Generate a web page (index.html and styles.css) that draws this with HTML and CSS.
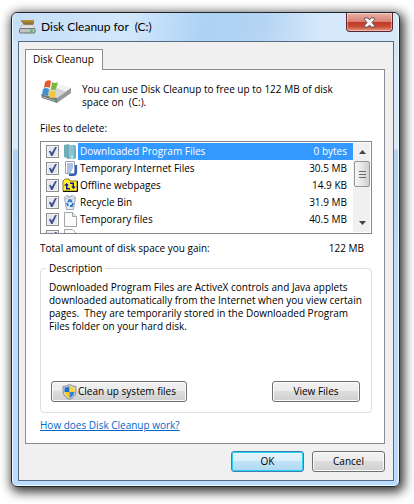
FILE: index.html
```html
<!DOCTYPE html>
<html lang="en">
<head>
    <meta charset="UTF-8">
    <meta name="viewport" content="width=device-width, initial-scale=1.0">
    <title>Disk Cleanup</title>
    <link rel="stylesheet" href="styles.css">
</head>
<body>

<div class="window">
    <div class="titlebar">
        <svg class="title-icon" width="17" height="16" viewBox="0 0 17 16">
            <path d="M2 1h13v2H2z" fill="#b58b32"/>
            <path d="M3 3h12l-1 3H5z" fill="#6f5523"/>
            <path d="M5 3v3M7 3v3M9 3v3M11 3v3M13 3v3" stroke="#d9b45c" stroke-width=".7"/>
            <path d="M3 6h11l2 4H1z" fill="#e4e5e8" stroke="#a5a7ac" stroke-width=".6"/>
            <rect x=".5" y="9.500" width="15.500" height="4.500" rx="1" fill="#bfc1c6" stroke="#707277"/>
            <rect x="11.500" y="10.500" width="2" height="3" fill="#35c43c"/>
        </svg>
        <h1>Disk Cleanup for &nbsp;(C:)</h1>
        <button class="close" aria-label="Close">
            <svg width="13" height="11" viewBox="0 0 13 11">
                <path d="M1.500 1h3.500l1.500 2L8 1h3.500v1.500L9 5.500l2.500 3V10H8L6.500 8 5 10H1.500V8.500l2.500-3-2.500-3z" fill="#f8f8fa" stroke="#5a4c58" stroke-width=".9"/>
            </svg>
        </button>
    </div>

    <div class="client">
        <div class="tabs"><button class="tab">Disk Cleanup</button></div>

        <div class="page">
            <div class="intro">
                <svg width="32" height="24" viewBox="0 0 32 24">
                    <path d="M2 14L17 4l14 4-14 10z" fill="#d3d5d6"/>
                    <path d="M17 4l14 4-5 3.500L13 7z" fill="#f0f1f1"/>
                    <path d="M1 14l16 4v5L2 18z" fill="#77797c"/>
                    <path d="M17 18L31 8v5l-14 10z" fill="#96999b"/>
                    <path d="M3 17l12 4" stroke="#aeb1b3"/>
                    <path d="M13 19.500l2 .5v1.500l-2-.5z" fill="#55dc54"/>
                    <path d="M5 2q3-3 6-1l-1 7q-3-2-6 0z" fill="#e5582e"/>
                    <path d="M12 2q3 2 6 0l-2 7q-2 2-5 0z" fill="#79b93a"/>
                    <path d="M3 9q3-2 6 0l-1 7q-3-2-6-1z" fill="#3d91d0"/>
                    <path d="M10 10q2 2 6 1l-1 6q-3 2-6 0z" fill="#f6c63a"/>
                </svg>
                <p>You can use Disk Cleanup to free up to 122 MB of disk space on &nbsp;(C:).</p>
            </div>

            <p class="list-title">Files to delete:</p>
            <div class="list">
                <ul>
                    <li>
                        <input type="checkbox" id="f1" checked>
                        <svg width="16" height="17" viewBox="0 0 16 17">
                            <path d="M2 2l5-1v15l-5-2z" fill="#6faeb9"/>
                            <path d="M5 2h8l1 1v12l-1 1H6z" fill="#8cc3cb"/>
                            <path d="M6 2v14M11 2l2 2v11" stroke="#5b9bab" fill="none"/>
                            <path d="M9 12h2v4H9z" fill="#b3dce1"/>
                        </svg>
                        <label class="selected" for="f1"><span>Downloaded Program Files</span><span>0 bytes</span></label>
                    </li>
                    <li>
                        <input type="checkbox" id="f2" checked>
                        <svg width="16" height="17" viewBox="0 0 16 17">
                            <path d="M3.500 1.500h9v12h-9z" fill="#fff" stroke="#98a1ac"/>
                            <path d="M5 4h6M5 6h6M5 8h6M5 10h5M5 12h4" stroke="#5b86c6"/>
                            <path d="M14 5v7q0 3-3 3H7" fill="none" stroke="#2d5fc5" stroke-width="2.200"/>
                        </svg>
                        <label for="f2"><span>Temporary Internet Files</span><span>30.5 MB</span></label>
                    </li>
                    <li>
                        <input type="checkbox" id="f3" checked>
                        <svg width="16" height="17" viewBox="0 0 16 17">
                            <path d="M1 4l2-2h4l1 2h7v10H1z" fill="#fff22d" stroke="#8b7c16"/>
                            <path d="M15.500 4v10.500H1" fill="none" stroke="#111"/>
                            <path d="M2 8.500L4.500 6 7 8.500H5.500V11H8v1.500H4v-4zM14 9.500L11.500 12 9 9.500h1.500V7H8V5.500h4v4z" fill="#13138c"/>
                        </svg>
                        <label for="f3"><span>Offline webpages</span><span>14.9 KB</span></label>
                    </li>
                    <li>
                        <input type="checkbox" id="f4" checked>
                        <svg width="16" height="17" viewBox="0 0 16 17">
                            <path d="M2.500 3.500l2-2 3 1 3-1 3 2-2 12h-7z" fill="#e5eaf0" stroke="#9ba8b6"/>
                            <path d="M3 4l5 2 5-2M5 2l2 2 3-2" fill="none" stroke="#b4bec9"/>
                            <path d="M6 8l2-2 2 2M11 9l-1 3H8M6 12L5 9" fill="none" stroke="#2a74cb" stroke-width="1.800"/>
                        </svg>
                        <label for="f4"><span>Recycle Bin</span><span>31.9 MB</span></label>
                    </li>
                    <li>
                        <input type="checkbox" id="f5" checked>
                        <svg width="16" height="17" viewBox="0 0 16 17">
                            <path d="M2.500 1.500h8l4 4v10h-12z" fill="#fbfbfb" stroke="#a2a4a6"/>
                            <path d="M10.500 1.500v4h4" fill="#e7e8e9" stroke="#a2a4a6"/>
                        </svg>
                        <label for="f5"><span>Temporary files</span><span>40.5 MB</span></label>
                    </li>
                    <li>
                        <input type="checkbox" id="f6" aria-label="More files" checked>
                        <svg width="16" height="17" viewBox="0 0 16 17">
                            <path d="M2.500 1.500h8l4 4v10h-12z" fill="#fbfbfb" stroke="#a2a4a6"/>
                        </svg>
                    </li>
                </ul>
                <div class="scrollbar">
                    <button aria-label="Scroll up"><svg width="7" height="4" viewBox="0 0 7 4"><path d="M0 4l3.500-4L7 4z" fill="#404347"/></svg></button>
                    <div class="thumb"><i></i><i></i><i></i></div>
                    <button class="down" aria-label="Scroll down"><svg width="7" height="4" viewBox="0 0 7 4"><path d="M0 0l3.500 4L7 0z" fill="#404347"/></svg></button>
                </div>
            </div>

            <div class="total"><span>Total amount of disk space you gain:</span><span>122 MB</span></div>

            <fieldset>
                <legend>Description</legend>
                <p>Downloaded Program Files are ActiveX controls and Java applets downloaded automatically from the Internet when you view certain pages. &nbsp;They are temporarily stored in the Downloaded Program Files folder on your hard disk.</p>
                <div class="group-buttons">
                    <button class="btn clean">
                        <svg width="15" height="16" viewBox="0 0 15 16">
                            <path d="M7.500.5q3 2 6.500 2v5q0 5-6.500 8Q1 12.500 1 7.500v-5q3.500 0 6.500-2z" fill="#d5d9dc" stroke="#85898e"/>
                            <path d="M7.500 2.200Q5 3.600 2.500 3.800V8h5z" fill="#1c6fd0"/>
                            <path d="M7.500 2.200Q10 3.600 12.500 3.800V8h-5z" fill="#fbd22f"/>
                            <path d="M2.500 8h5v6Q3 12 2.500 8z" fill="#fbc81e"/>
                            <path d="M12.500 8h-5v6q4.500-2 5-6z" fill="#2b83df"/>
                        </svg>
                        Clean up system files
                    </button>
                    <button class="btn view">View Files</button>
                </div>
            </fieldset>

            <a href="#">How does Disk Cleanup work?</a>
        </div>

        <div class="footer">
            <button class="btn ok">OK</button>
            <button class="btn">Cancel</button>
        </div>
    </div>
</div>

</body>
</html>
```
FILE: styles.css
```css
* {
    box-sizing: border-box;
}
body {
    margin: 0;
    padding: 12px 14px 16px 11px;
    background: #fff;
    color: #000;
    font: 10px/13px "Open Sans", "Noto Sans", sans-serif;
}
button {
    padding: 0;
    font: inherit;
    color: inherit;
}
p, h1, ul {
    margin: 0;
    padding: 0;
}

/* Window frame */
.window {
    padding: 0 5px 5px 6px;
    border: 1px solid #20262e;
    border-radius: 6px;
    background: linear-gradient(#d3e7fb 0, #d9e9fa 135px, #b2d2f1 138px, #b9dcff 240px);
    box-shadow: inset 0 0 0 1px #eef8ff, 2px 3px 11px 2px rgba(0, 0, 0, 0.8);
}
.titlebar {
    display: flex;
    align-items: center;
    height: 28px;
    margin: 0 -4px 0 -5px;
    padding: 0 5px 0 6px;
    border-radius: 5px 5px 0 0;
    background: linear-gradient(100deg, #c5dff8, #d2e7fb 30%, #acd2f5 50%, #b5d5f3 65%, #d6e9fb 80%);
}
.title-icon {
    margin-right: 5px;
}
h1 {
    flex: 1;
    font: 12px/16px Lato, "Open Sans", sans-serif;
}
.close {
    align-self: flex-start;
    display: flex;
    align-items: center;
    justify-content: center;
    width: 47px;
    height: 19px;
    border: 1px solid #5b2430;
    border-top: 0;
    border-radius: 0 0 4px 4px;
    background: linear-gradient(#eab2a8, #d98072 48%, #bf3926 50%, #c94b34 75%, #e39a80);
    box-shadow: inset 0 0 0 1px rgba(255, 255, 255, 0.4);
}
.client {
    padding: 7px 8px 8px 6px;
    border: 1px solid #566a80;
    background: #f0f0f0;
}

/* Tab and its page */
.tabs {
    display: flex;
}
.tab {
    position: relative;
    height: 21px;
    margin-bottom: -1px;
    padding: 0 8px 2px 7px;
    border: 1px solid #898c95;
    border-bottom: 0;
    background: #fff;
}
.page {
    padding: 11px 12px 11px 14px;
    border: 1px solid #898c95;
    background: #fff;
}
.intro {
    display: flex;
    gap: 10px;
    padding-top: 2px;
}
.intro svg {
    flex: none;
    margin-top: -3px;
}
.intro p {
    max-width: 270px;
}
.list-title {
    margin: 13px 0 6px;
}

/* File list */
.list {
    display: flex;
    height: 93px;
    padding: 1px 1px 1px 5px;
    border: 1px solid #828790;
    overflow: hidden;
}
ul {
    flex: 1;
    list-style: none;
}
li {
    display: flex;
    align-items: center;
    height: 17px;
}
li svg {
    flex: none;
    margin: 0 0 0 3px;
}
input {
    appearance: none;
    flex: none;
    width: 13px;
    height: 13px;
    margin: 0;
    border: 1px solid #8e8f8f;
    background: #e3e6ec;
    box-shadow: inset 0 0 0 1px #f4f4f4;
}
input:checked::before {
    content: "";
    display: block;
    height: 11px;
    background: #3c4f8f;
    clip-path: polygon(18% 48%, 32% 44%, 44% 62%, 74% 9%, 90% 9%, 50% 91%, 38% 91%);
}
label {
    flex: 1;
    display: flex;
    justify-content: space-between;
    padding: 2px 6px 2px 2px;
}
.selected {
    background: #3399ff;
    color: #fff;
}
.scrollbar {
    display: flex;
    flex-direction: column;
    width: 17px;
    padding-left: 1px;
    background: #f0f0f0;
}
.scrollbar button {
    display: flex;
    align-items: center;
    justify-content: center;
    height: 18px;
    border: 0;
    background: none;
}
.scrollbar .down {
    margin-top: auto;
}
.thumb {
    display: flex;
    flex-direction: column;
    align-items: center;
    justify-content: center;
    gap: 2px;
    height: 26px;
    border: 1px solid #979797;
    border-radius: 2px;
    background: linear-gradient(90deg, #f5f5f5, #e6e6e8 50%, #cfcfd2);
}
.thumb i {
    width: 7px;
    height: 1px;
    background: #666a70;
}
.total {
    display: flex;
    justify-content: space-between;
    margin: 8px 0 7px;
    padding-right: 8px;
}

/* Description group */
fieldset {
    margin: 0;
    padding: 6px 2px 10px 8px;
    border: 1px solid #d5dfe5;
    border-radius: 4px;
}
legend {
    margin-left: -3px;
    padding: 0 3px;
}
.group-buttons {
    display: flex;
    justify-content: space-between;
    margin-top: 48px;
    padding: 0 9px 0 2px;
}
.btn {
    width: 73px;
    height: 21px;
    border: 1px solid #707070;
    border-radius: 3px;
    background: linear-gradient(#f2f2f2, #ebebeb 49%, #dddddd 50%, #cfcfcf);
    box-shadow: inset 0 0 0 1px #fafafa;
}
.clean {
    display: flex;
    align-items: center;
    justify-content: center;
    gap: 1px;
    width: 136px;
}
.view {
    width: 88px;
}
.page a {
    display: inline-block;
    margin-top: 6px;
    color: #0066cc;
}
.footer {
    display: flex;
    justify-content: flex-end;
    gap: 8px;
    margin-top: 7px;
}
.ok {
    border-color: #3c7fb1;
    background: linear-gradient(#e9f5fb, #d9eefa 49%, #c0e2f6 50%, #add9f1);
    box-shadow: inset 0 0 0 1px #2bd0fa;
}
```
